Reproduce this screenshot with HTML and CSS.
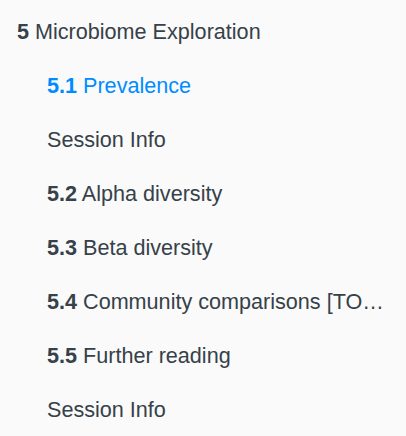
FILE: index.html
```html
<!DOCTYPE html>
<html>
<head>
<meta charset="utf-8">
<link rel="stylesheet" href="styles.css">
</head>
<body>
<nav class="toc">
  <ul class="chapters">
    <li class="chapter"><a href="#"><b>5</b> Microbiome Exploration</a>
      <ul class="sections">
        <li class="section active"><a href="#"><b>5.1</b> Prevalence</a></li>
        <li class="section"><a href="#">Session Info</a></li>
        <li class="section"><a href="#"><b>5.2</b> Alpha diversity</a></li>
        <li class="section"><a href="#"><b>5.3</b> Beta diversity</a></li>
        <li class="section"><a href="#"><b>5.4</b> Community comparisons [TODO]</a></li>
        <li class="section"><a href="#"><b>5.5</b> Further reading</a></li>
        <li class="section"><a href="#">Session Info</a></li>
      </ul>
    </li>
  </ul>
</nav>
</body>
</html>
```
FILE: styles.css
```css
html, body {
  margin: 0;
  padding: 0;
  background: #fafafa;
}
body {
  font-family: "Liberation Sans", Arial, sans-serif;
  font-size: 21.6px;
  color: #364149;
}
.toc {
  width: 406px;
  padding-top: 5px;
}
.chapters, .sections {
  list-style: none;
  margin: 0;
  padding: 0;
}
.sections {
  padding-left: 30px;
}
.toc a {
  display: block;
  height: 54px;
  line-height: 54px;
  padding: 0 15px 0 17px;
  color: #364149;
  text-decoration: none;
  white-space: nowrap;
  overflow: hidden;
  text-overflow: ellipsis;
}
.toc b {
  font-weight: bold;
}
.active > a {
  color: #008cff;
}
```
